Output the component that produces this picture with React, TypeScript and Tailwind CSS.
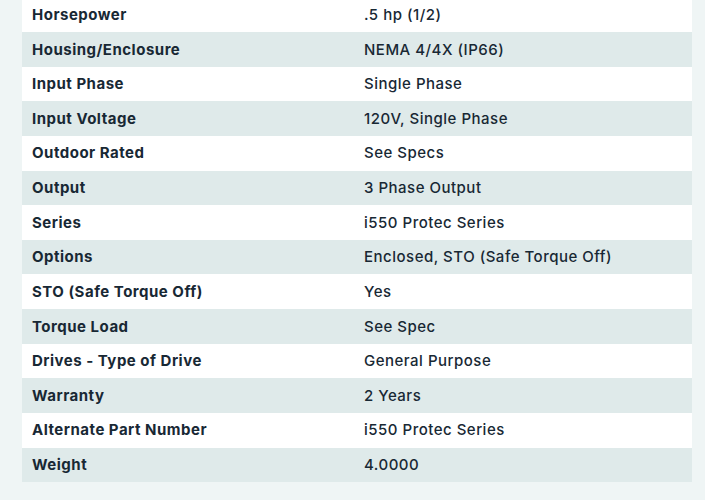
const specs = [
  { label: 'Horsepower', value: '.5 hp (1/2)' },
  { label: 'Housing/Enclosure', value: 'NEMA 4/4X (IP66)' },
  { label: 'Input Phase', value: 'Single Phase' },
  { label: 'Input Voltage', value: '120V, Single Phase' },
  { label: 'Outdoor Rated', value: 'See Specs' },
  { label: 'Output', value: '3 Phase Output' },
  { label: 'Series', value: 'i550 Protec Series' },
  { label: 'Options', value: 'Enclosed, STO (Safe Torque Off)' },
  { label: 'STO (Safe Torque Off)', value: 'Yes' },
  { label: 'Torque Load', value: 'See Spec' },
  { label: 'Drives - Type of Drive', value: 'General Purpose' },
  { label: 'Warranty', value: '2 Years' },
  { label: 'Alternate Part Number', value: 'i550 Protec Series' },
  { label: 'Weight', value: '4.0000' },
];

export default function App(): React.ReactElement {
  return (
    <div className="h-[500px] w-full overflow-hidden bg-[#eff5f5] font-['Inter',sans-serif] text-[15px] tracking-[0.5px] text-[#182834]">
      <div className="ml-[22px] mt-[-2.6px] w-[670px]">
        {specs.map((row, index) => (
          <div
            key={row.label}
            className={`grid h-[34.64px] grid-cols-[342px_1fr] items-center pt-[1px] ${
              index % 2 === 0 ? 'bg-white' : 'bg-[#dfeaea]'
            }`}
          >
            <span className="pl-[10px] font-bold">{row.label}</span>
            <span className="font-medium">{row.value}</span>
          </div>
        ))}
      </div>
    </div>
  );
}
